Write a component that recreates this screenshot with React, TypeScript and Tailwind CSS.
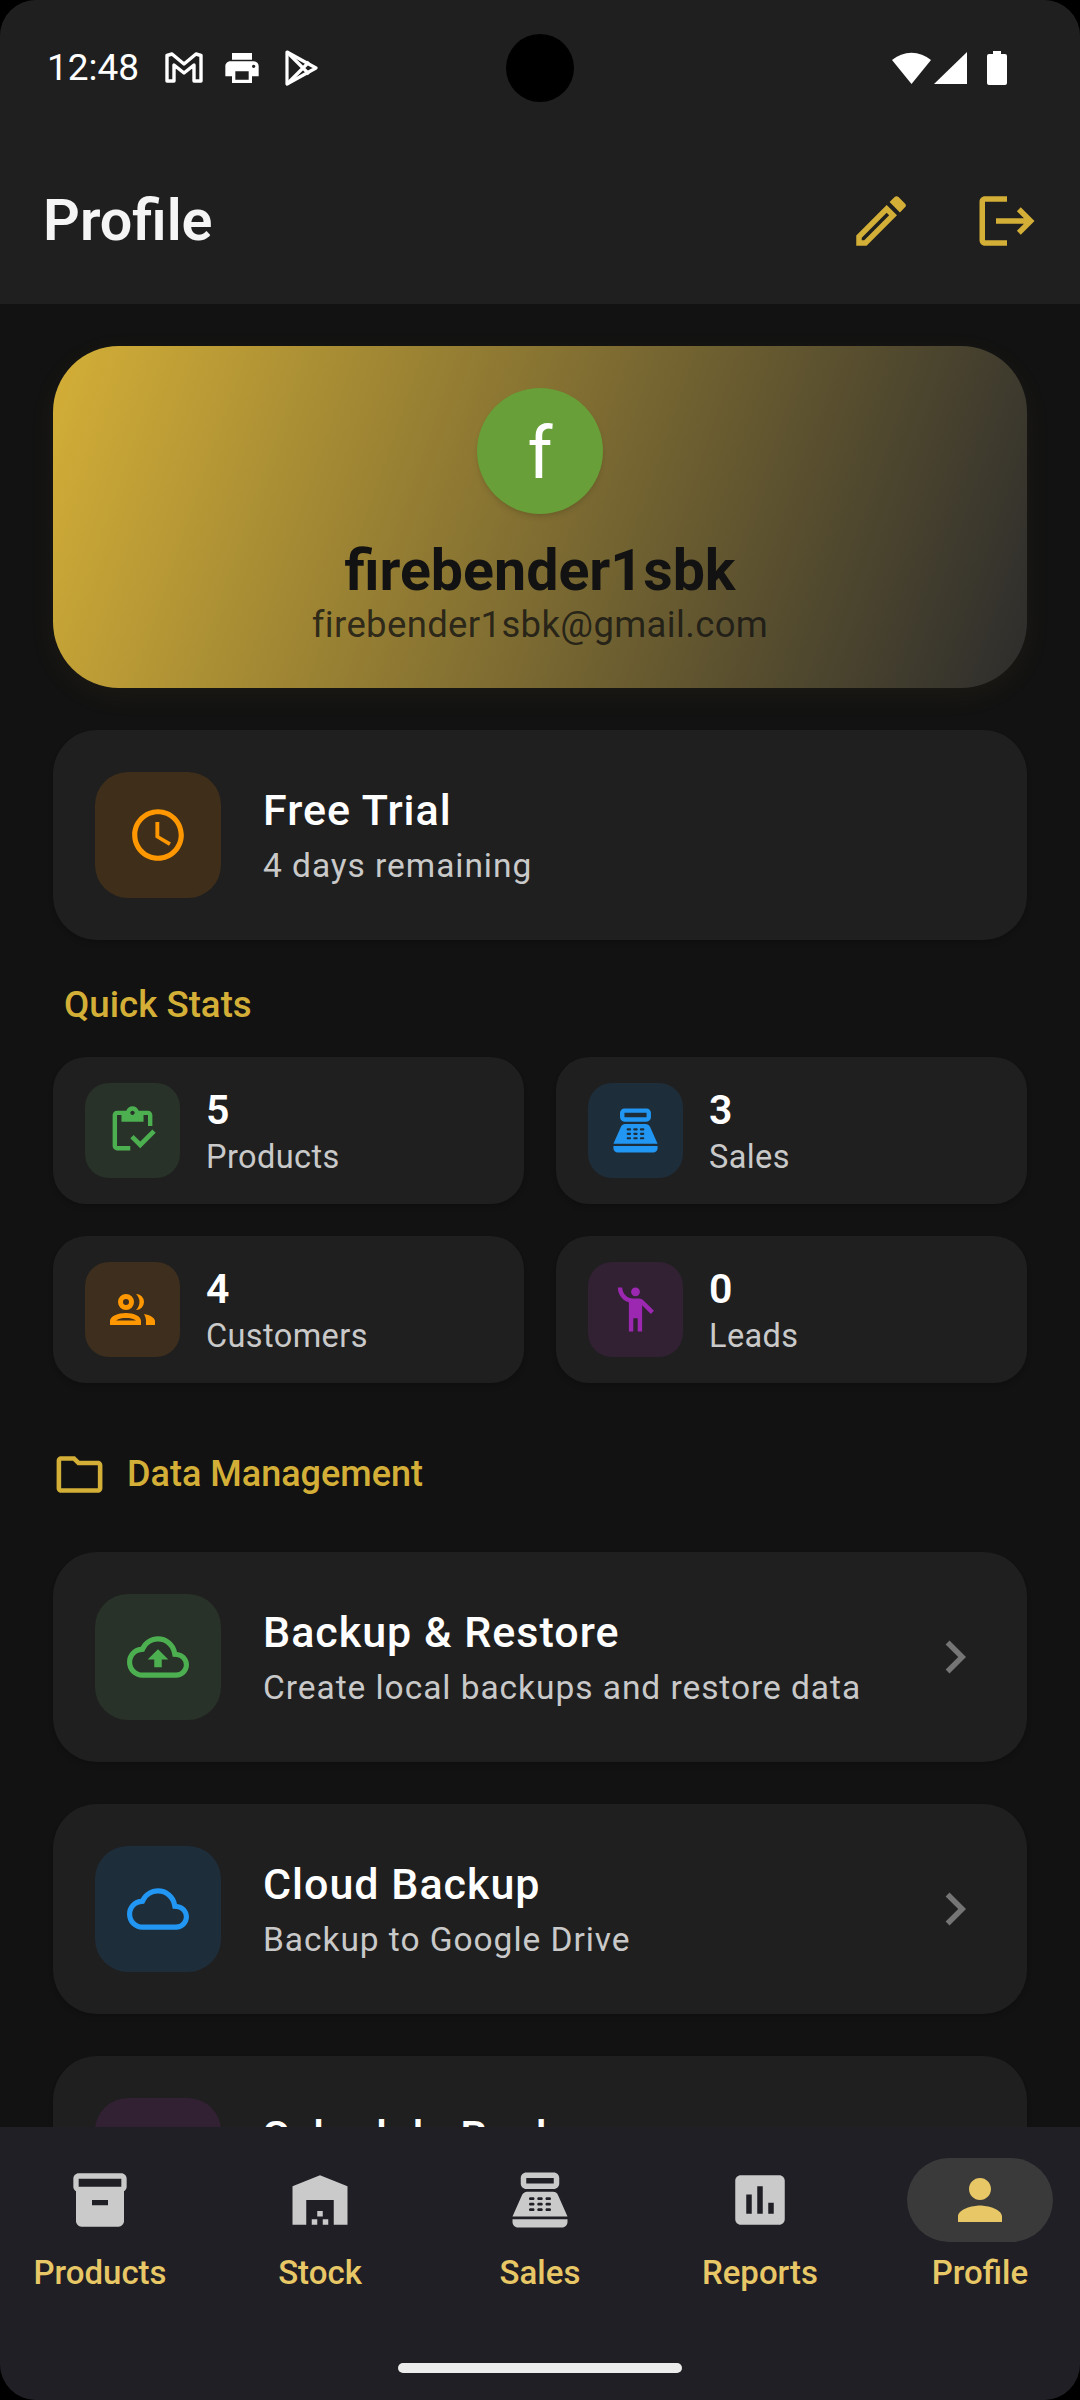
import React from "react";
import {
  MdOutlineEdit, MdLogout, MdOutlineAccessTime, MdOutlineInventory, MdPointOfSale,
  MdEmojiPeople, MdOutlineFolder, MdOutlineBackup, MdOutlineCloud, MdChevronRight, MdInventory2, MdWarehouse, MdAssessment, MdPerson,
  MdPrint,
} from "react-icons/md";

const font = { fontFamily: "Roboto, sans-serif" };

function GmailIcon() {
  return (
    <svg width="38" height="32" viewBox="0 0 38 32" fill="none" stroke="white" strokeWidth="3.4" strokeLinejoin="round">
      <path d="M2 3.5 L7 2 L19 12 L31 2 L36 3.5 V29 H29 V13 L19 21 L9 13 V29 H2 Z" />
    </svg>
  );
}

function PlayIcon() {
  return (
    <svg width="34" height="38" viewBox="0 0 34 38" fill="none" stroke="white" strokeWidth="3.2" strokeLinejoin="round">
      <path d="M3 3 L32 19 L3 35 Z" />
      <path d="M3 3 L19 19 L3 35 M19 19 L25 13 M19 19 L25 25" />
    </svg>
  );
}

function WifiIcon() {
  return (
    <svg width="39" height="32" viewBox="0 0 39 32" fill="white">
      <path d="M0 8 A 30 30 0 0 1 39 8 L19.5 32 Z" />
    </svg>
  );
}

function SignalIcon() {
  return (
    <svg width="33" height="32" viewBox="0 0 33 32" fill="white">
      <path d="M33 0 V32 H0 Z" />
    </svg>
  );
}

function BatteryIcon() {
  return (
    <svg width="20" height="34" viewBox="0 0 20 34" fill="white">
      <path d="M6 0 H14 V3 H18 A2 2 0 0 1 20 5 V32 A2 2 0 0 1 18 34 H2 A2 2 0 0 1 0 32 V5 A2 2 0 0 1 2 3 H6 Z" />
    </svg>
  );
}

function CustomersIcon() {
  return (
    <svg width="46" height="32" viewBox="0 0 46 32" fill="#ff9800" fillRule="evenodd">
      <path d="M16 0 A8 8 0 1 1 16 16 A8 8 0 1 1 16 0 Z M16 5 A3 3 0 1 0 16 11 A3 3 0 1 0 16 5 Z" />
      <path d="M26 0 A8 8 0 0 1 26 16 A11 11 0 0 0 26 0 Z" />
      <path d="M0 31 V27 C0 22 8 19 16 19 C24 19 31 22 31 27 V31 Z M6 26.5 C9 24.5 12 24 16 24 C20 24 23 24.5 26 26.5 Z" />
      <path d="M34 20 C40 21 45 24 45 27 V31 H36 V27 C36 24 35 22 34 20 Z" />
    </svg>
  );
}

function StatusBar() {
  return (
    <div className="flex items-center justify-between h-[36px] mt-[50px] pl-[47px] pr-[73px]">
      <div className="flex items-center">
        <span className="text-[37px] leading-[36px] text-white font-normal w-[118px]">12:48</span>
        <div className="flex items-center w-[57px]"><GmailIcon /></div>
        <div className="flex items-center w-[62px]"><MdPrint size={40} color="white" /></div>
        <PlayIcon />
      </div>
      <div className="flex items-center">
        <WifiIcon />
        <div className="ml-[3px]"><SignalIcon /></div>
        <div className="ml-[20px]"><BatteryIcon /></div>
      </div>
    </div>
  );
}

function StatCard({ n, label, bg, icon }: { n: string; label: string; bg: string; icon: React.ReactNode }) {
  return (
    <div className="flex items-center h-[147px] rounded-[33px] bg-[#1f1f1f] pl-[32px] shadow-md">
      <div className={`flex items-center justify-center w-[95px] h-[95px] rounded-[24px] ${bg}`}>{icon}</div>
      <div className="ml-[26px] mt-[2px] flex flex-col">
        <span className="text-[41px] leading-[50px] font-semibold text-white">{n}</span>
        <span className="mt-[1px] text-[32.5px] leading-[42px] tracking-[0.4px] text-[#c9c9c9]">{label}</span>
      </div>
    </div>
  );
}

function RowCard({ title, sub, bg, icon, chevron = true }: { title: string; sub?: string; bg: string; icon: React.ReactNode; chevron?: boolean }) {
  return (
    <div className="flex items-center shrink-0 h-[210px] rounded-[44px] bg-[#1f1f1f] px-[42px] shadow-md">
      <div className={`flex items-center justify-center shrink-0 w-[126px] h-[126px] rounded-[33px] ${bg}`}>{icon}</div>
      <div className="ml-[42px] mt-[6px] flex flex-col flex-1">
        <span className="text-[43px] leading-[56px] font-medium tracking-[1px] text-white">{title}</span>
        <span className="h-[56px] text-[33.5px] leading-[56px] tracking-[0.95px] text-[#c9c9c9]">{sub}</span>
      </div>
      {chevron && <MdChevronRight size={66} color="#757575" className="mr-[-3px]" />}
    </div>
  );
}

function NavItem({ label, icon, active }: { label: string; icon: React.ReactNode; active?: boolean }) {
  return (
    <div className="flex flex-col items-center shrink-0 w-[220px]">
      <div className={`flex items-center justify-center w-[146px] h-[84px] rounded-[42px] ${active ? "bg-[#3a3a3a]" : ""}`}>{icon}</div>
      <span className="mt-[9px] text-[33px] leading-[44px] font-medium text-[#e8c766]">{label}</span>
    </div>
  );
}

export default function App() {
  return (
    <div className="w-[1080px] h-[2400px] bg-black" style={font}>
      <div className="relative w-full h-full flex flex-col overflow-hidden rounded-[36px] bg-[#121212]">
        <header className="shrink-0 h-[304px] bg-[#1f1f1f] flex flex-col">
          <StatusBar />
          <div className="flex items-center justify-between mt-[102px] pl-[43px] pr-[40px] h-[66px]">
            <h1 className="text-[57.5px] leading-[66px] font-semibold text-[#f5f5f5]">Profile</h1>
            <div className="flex items-center gap-[60px]">
              <MdOutlineEdit size={66} color="#d4af37" />
              <MdLogout size={66} color="#d4af37" />
            </div>
          </div>
        </header>

        <div className="absolute left-[506px] top-[34px] w-[68px] h-[68px] rounded-full bg-black" />

        <main className="flex-1 min-h-0 overflow-hidden flex flex-col px-[53px] pt-[42px]">
          <section className="shrink-0 h-[342px] rounded-[66px] bg-[linear-gradient(109deg,#d4af37,#2c2c2c)] flex flex-col items-center pt-[42px] shadow-[0_8px_30px_rgba(212,175,55,0.05)]">
            <div className="flex items-center justify-center w-[126px] h-[126px] rounded-full bg-[#689f38] shadow-md">
              <span className="text-[72px] leading-[72px] text-white mt-[6px]">f</span>
            </div>
            <span className="mt-[24px] text-[57.3px] leading-[66px] font-bold text-[#121212]">firebender1sbk</span>
            <span className="-mt-[1px] text-[36.5px] leading-[44px] tracking-[0.35px] text-[#121212]/80">firebender1sbk@gmail.com</span>
          </section>

          <div className="mt-[42px]">
            <RowCard title="Free Trial" sub="4 days remaining" bg="bg-[#3e2e1a]" chevron={false} icon={<MdOutlineAccessTime size={62} color="#ff9800" />} />
          </div>

          <h2 className="mt-[42px] ml-[11px] text-[36.7px] leading-[46px] font-medium text-[#d4af37]">Quick Stats</h2>

          <div className="mt-[29px] grid grid-cols-2 gap-x-[32px] gap-y-[32px]">
            <StatCard n="5" label="Products" bg="bg-[#283229]" icon={<MdOutlineInventory size={53} color="#4caf50" />} />
            <StatCard n="3" label="Sales" bg="bg-[#1e2d3a]" icon={<MdPointOfSale size={53} color="#2196f3" />} />
            <StatCard n="4" label="Customers" bg="bg-[#3d2e1e]" icon={<CustomersIcon />} />
            <StatCard n="0" label="Leads" bg="bg-[#312133]" icon={<MdEmojiPeople size={53} color="#9c27b0" />} />
          </div>

          <div className="mt-[67px] flex items-center h-[48px]">
            <MdOutlineFolder size={55} color="#d4af37" className="ml-[-1px]" />
            <span className="ml-[20px] text-[36px] leading-[46px] font-medium text-[#d4af37]">Data Management</span>
          </div>

          <div className="mt-[54px] flex flex-col gap-[42px]">
            <RowCard title="Backup & Restore" sub="Create local backups and restore data" bg="bg-[#283229]" icon={<MdOutlineBackup size={62} color="#4caf50" />} />
            <RowCard title="Cloud Backup" sub="Backup to Google Drive" bg="bg-[#1e2d3a]" icon={<MdOutlineCloud size={62} color="#2196f3" />} />
            <RowCard title="Schedule Backup" bg="bg-[#312133]" icon={<MdOutlineCloud size={62} color="#9c27b0" />} />
          </div>
        </main>

        <nav className="shrink-0 h-[273px] bg-[#1f1f25] flex flex-col relative z-10">
          <div className="flex justify-center pt-[31px]">
            <NavItem label="Products" icon={<MdInventory2 size={64} color="#cacaca" />} />
            <NavItem label="Stock" icon={<MdWarehouse size={66} color="#cacaca" />} />
            <NavItem label="Sales" icon={<MdPointOfSale size={66} color="#cacaca" />} />
            <NavItem label="Reports" icon={<MdAssessment size={66} color="#cacaca" />} />
            <NavItem label="Profile" active icon={<MdPerson size={66} color="#e8c766" />} />
          </div>
          <div className="mt-auto mb-[27px] self-center w-[284px] h-[10px] rounded-full bg-[#ececec]" />
        </nav>
      </div>
    </div>
  );
}
